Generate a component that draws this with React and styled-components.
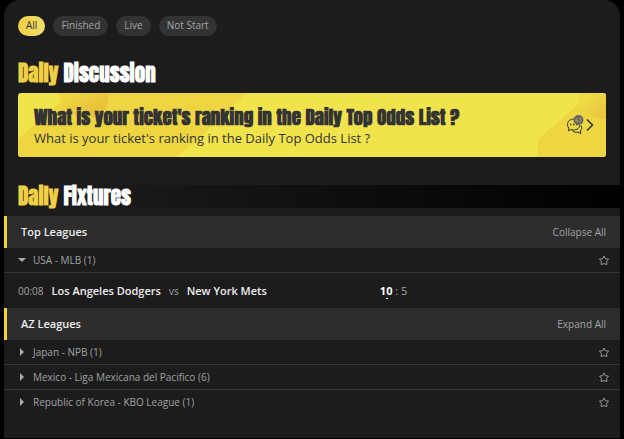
import React, { useState } from "react";
import styled, { createGlobalStyle } from "styled-components";

const DISPLAY_FONT = `Impact, Anton, "Liberation Sans", sans-serif`;

const GlobalStyle = createGlobalStyle`
  * {
    box-sizing: border-box;
  }

  body {
    margin: 0;
    background: #000;
    color: #a3a3a3;
    font-family: "Open Sans", "Noto Sans", sans-serif;
    font-size: 10px;
    line-height: 16px;
  }

  button {
    padding: 0;
    border: none;
    background: none;
    color: inherit;
    font: inherit;
    cursor: pointer;
  }
`;

const Panel = styled.main`
  margin: 0 4px;
  padding: 16px 0 24px;
  border-radius: 16px 16px 0 0;
  background: #1c1c1c;
`;

const Filters = styled.nav`
  display: flex;
  gap: 8px;
  padding: 0 14px;
`;

const FilterButton = styled.button`
  && {
    height: 20px;
    padding: 0 8px 2px;
    border-radius: 10px;
    background: ${({ $active }) =>
      $active ? "linear-gradient(90deg, #efcf45, #f1dd6c)" : "#333"};
    color: ${({ $active }) => ($active ? "#333" : "#a3a3a3")};
  }
`;

const SectionTitle = styled.h2`
  margin: 0;
  padding: 0 14px;
  color: #fff;
  font-family: ${DISPLAY_FONT};
  font-size: 21px;
  font-weight: 700;
  line-height: 23px;
`;

const DiscussionTitle = styled(SectionTitle)`
  margin-top: 26px;
`;

const FixturesTitle = styled(SectionTitle)`
  margin: 28px 0 8px;
  background: linear-gradient(90deg, #1c1c1c 10%, #000);
`;

const Accent = styled.span`
  color: #efcf45;
`;

const Banner = styled.a`
  position: relative;
  display: flex;
  align-items: center;
  justify-content: space-between;
  height: 64px;
  margin: 8px 14px 0;
  padding: 0 12px 0 16px;
  overflow: hidden;
  border-radius: 3px;
  background: #f1e34c;
  color: #333;
  text-decoration: none;
`;

const BannerArt = styled.svg`
  position: absolute;
  top: 0;
  ${({ $side }) => $side}: 0;
`;

const BannerText = styled.div`
  position: relative;
`;

const BannerTitle = styled.div`
  font-family: ${DISPLAY_FONT};
  font-size: 19px;
  font-weight: 700;
  line-height: 26px;
`;

const BannerSubtitle = styled.div`
  font-size: 13px;
  line-height: 16px;
`;

const BannerIcons = styled.div`
  position: relative;
  display: flex;
  align-items: center;
  gap: 2px;
`;

const GroupHeader = styled.header`
  display: flex;
  align-items: center;
  justify-content: space-between;
  height: 32px;
  padding: 0 14px;
  border-left: 3px solid #f5d33f;
  background: #2d2d2d;
`;

const GroupTitle = styled.h3`
  margin: 0;
  color: #eee;
  font-size: 11px;
  font-weight: 600;
`;

const LeagueList = styled.ul`
  margin: 0;
  padding: 0;
  list-style: none;
`;

const LeagueItem = styled.li`
  & + & {
    border-top: 1px solid #383838;
  }
`;

const LeagueRow = styled.div`
  display: flex;
  align-items: center;
  justify-content: space-between;
  height: 24px;
  padding: 0 10px 0 14px;
`;

const LeagueButton = styled.button`
  display: flex;
  align-items: center;
  gap: 7px;
`;

const StarButton = styled.button`
  display: flex;
`;

const Match = styled.div`
  display: grid;
  grid-template-columns: 8fr 5fr;
  align-items: center;
  height: 36px;
  padding: 0 14px;
  border-top: 1px solid #383838;
`;

const Teams = styled.div`
  display: flex;
  align-items: center;
  gap: 8px;
`;

const Team = styled.span`
  color: #eee;
  font-size: 11px;
  font-weight: 600;
`;

const Score = styled.div`
  font-size: 11px;
`;

const Leading = styled.strong`
  position: relative;
  color: #fff;
  font-weight: 700;

  &::after {
    content: "";
    position: absolute;
    bottom: -1px;
    left: 6px;
    width: 2px;
    height: 1px;
    background: #fff;
  }
`;

const FILTERS = ["All", "Finished", "Live", "Not Start"];

const QUESTION = "What is your ticket's ranking in the Daily Top Odds List ?";

const GROUPS = [
  {
    title: "Top Leagues",
    action: "Collapse All",
    leagues: [
      {
        name: "USA - MLB",
        count: 1,
        match: {
          time: "00:08",
          home: "Los Angeles Dodgers",
          away: "New York Mets",
          homeScore: 10,
          awayScore: 5,
        },
      },
    ],
  },
  {
    title: "AZ Leagues",
    action: "Expand All",
    leagues: [
      { name: "Japan - NPB", count: 1 },
      { name: "Mexico - Liga Mexicana del Pacifico", count: 6 },
      { name: "Republic of Korea - KBO League", count: 1 },
    ],
  },
];

const Caret = ({ open }) => (
  <svg width="8" height="8" viewBox="0 0 8 8" fill="#aaa" aria-hidden="true">
    <path d={open ? "M0 2h8L4 6z" : "M2 0v8l4-4z"} />
  </svg>
);

const Star = () => (
  <svg
    width="12"
    height="12"
    viewBox="0 0 12 12"
    fill="none"
    stroke="#999"
    aria-hidden="true"
  >
    <path d="M6 2 7.3 4.7 10.5 5.1 8.6 7.3 8.9 10.5 6 9.6 3.1 10.5 3.4 7.3 1.5 5.1 4.7 4.7z" />
  </svg>
);

const ChatIcon = () => (
  <svg width="18" height="20" viewBox="0 0 18 20" fill="none" aria-hidden="true">
    <g stroke="#333">
      <path d="M10 4.6C5.5 3 1.5 5.5 1.5 9.6c0 1.5.5 2.7 1.4 3.6l-.7 2.6 2.8-1.2c4.3 1.2 8.8-.7 8.8-4.8" />
      <path d="M15 10.5c1.2 2 .8 4.2-.7 5.4l.4 2.6-2.6-1.3c-2.6.6-5-.3-6.3-2.3" />
    </g>
    <path
      d="M4 9.5h1.4M7 9.5h1.4M10 9.5h1.4"
      stroke="#333"
      strokeWidth="1.4"
    />
    <circle cx="12.5" cy="5" r="5" fill="#666" />
    <path
      d="M10.8 3 9.5 5.8h2.4M11.2 4.4v2.8M13.2 3.3h2l-.8 1.6c1.5.2 1 2.2-1.2 1.8"
      stroke="#b8ae4c"
      strokeWidth=".8"
    />
  </svg>
);

const Chevron = () => (
  <svg width="8" height="14" viewBox="0 0 8 14" fill="none" aria-hidden="true">
    <path d="M1 1.5 6.5 7 1 12.5" stroke="#333" strokeWidth="1.5" />
  </svg>
);

const League = ({ league }) => {
  const { name, count, match } = league;

  return (
    <LeagueItem>
      <LeagueRow>
        <LeagueButton type="button" aria-expanded={Boolean(match)}>
          <Caret open={Boolean(match)} />
          {name} ({count})
        </LeagueButton>
        <StarButton type="button" aria-label={`Add ${name} to favourites`}>
          <Star />
        </StarButton>
      </LeagueRow>
      {match && (
        <Match>
          <Teams>
            <time>{match.time}</time>
            <Team>{match.home}</Team>
            <span>vs</span>
            <Team>{match.away}</Team>
          </Teams>
          <Score>
            <Leading>{match.homeScore}</Leading> : {match.awayScore}
          </Score>
        </Match>
      )}
    </LeagueItem>
  );
};

const App = () => {
  const [filter, setFilter] = useState("All");

  return (
    <>
      <GlobalStyle />
      <Panel>
        <Filters>
          {FILTERS.map((name) => (
            <FilterButton
              key={name}
              type="button"
              $active={name === filter}
              onClick={() => setFilter(name)}
            >
              {name}
            </FilterButton>
          ))}
        </Filters>

        <DiscussionTitle>
          <Accent>Daily</Accent> Discussion
        </DiscussionTitle>
        <Banner href="#discussion">
          <BannerArt $side="left" width="230" height="64" aria-hidden="true">
            <defs>
              <linearGradient id="blobLeft" x1="0" y1="0" x2="1" y2="1">
                <stop offset="0.1" stopColor="#edd842" />
                <stop offset="0.7" stopColor="#eac13a" />
              </linearGradient>
            </defs>
            <path d="M0 46 42 10 52 0H229L180 46 158 64H0z" fill="#edd642" />
            <path d="M40 0H91C91 14 84 25 70 25 54 25 42 15 40 0z" fill="url(#blobLeft)" />
          </BannerArt>
          <BannerArt $side="right" width="70" height="64" aria-hidden="true">
            <defs>
              <linearGradient id="blobRight" x1="0" y1="0" x2="1" y2="1">
                <stop offset="0.2" stopColor="#eedc46" />
                <stop offset="1" stopColor="#eac33b" />
              </linearGradient>
            </defs>
            <path d="M2 64V46L44 10 70 0V64z" fill="#edd642" />
            <path d="M42 0C43 15 54 26 70 26V0z" fill="url(#blobRight)" />
          </BannerArt>
          <BannerText>
            <BannerTitle>{QUESTION}</BannerTitle>
            <BannerSubtitle>{QUESTION}</BannerSubtitle>
          </BannerText>
          <BannerIcons>
            <ChatIcon />
            <Chevron />
          </BannerIcons>
        </Banner>

        <FixturesTitle>
          <Accent>Daily</Accent> Fixtures
        </FixturesTitle>
        {GROUPS.map((group) => (
          <section key={group.title}>
            <GroupHeader>
              <GroupTitle>{group.title}</GroupTitle>
              <button type="button">{group.action}</button>
            </GroupHeader>
            <LeagueList>
              {group.leagues.map((league) => (
                <League key={league.name} league={league} />
              ))}
            </LeagueList>
          </section>
        ))}
      </Panel>
    </>
  );
};

export default App;
